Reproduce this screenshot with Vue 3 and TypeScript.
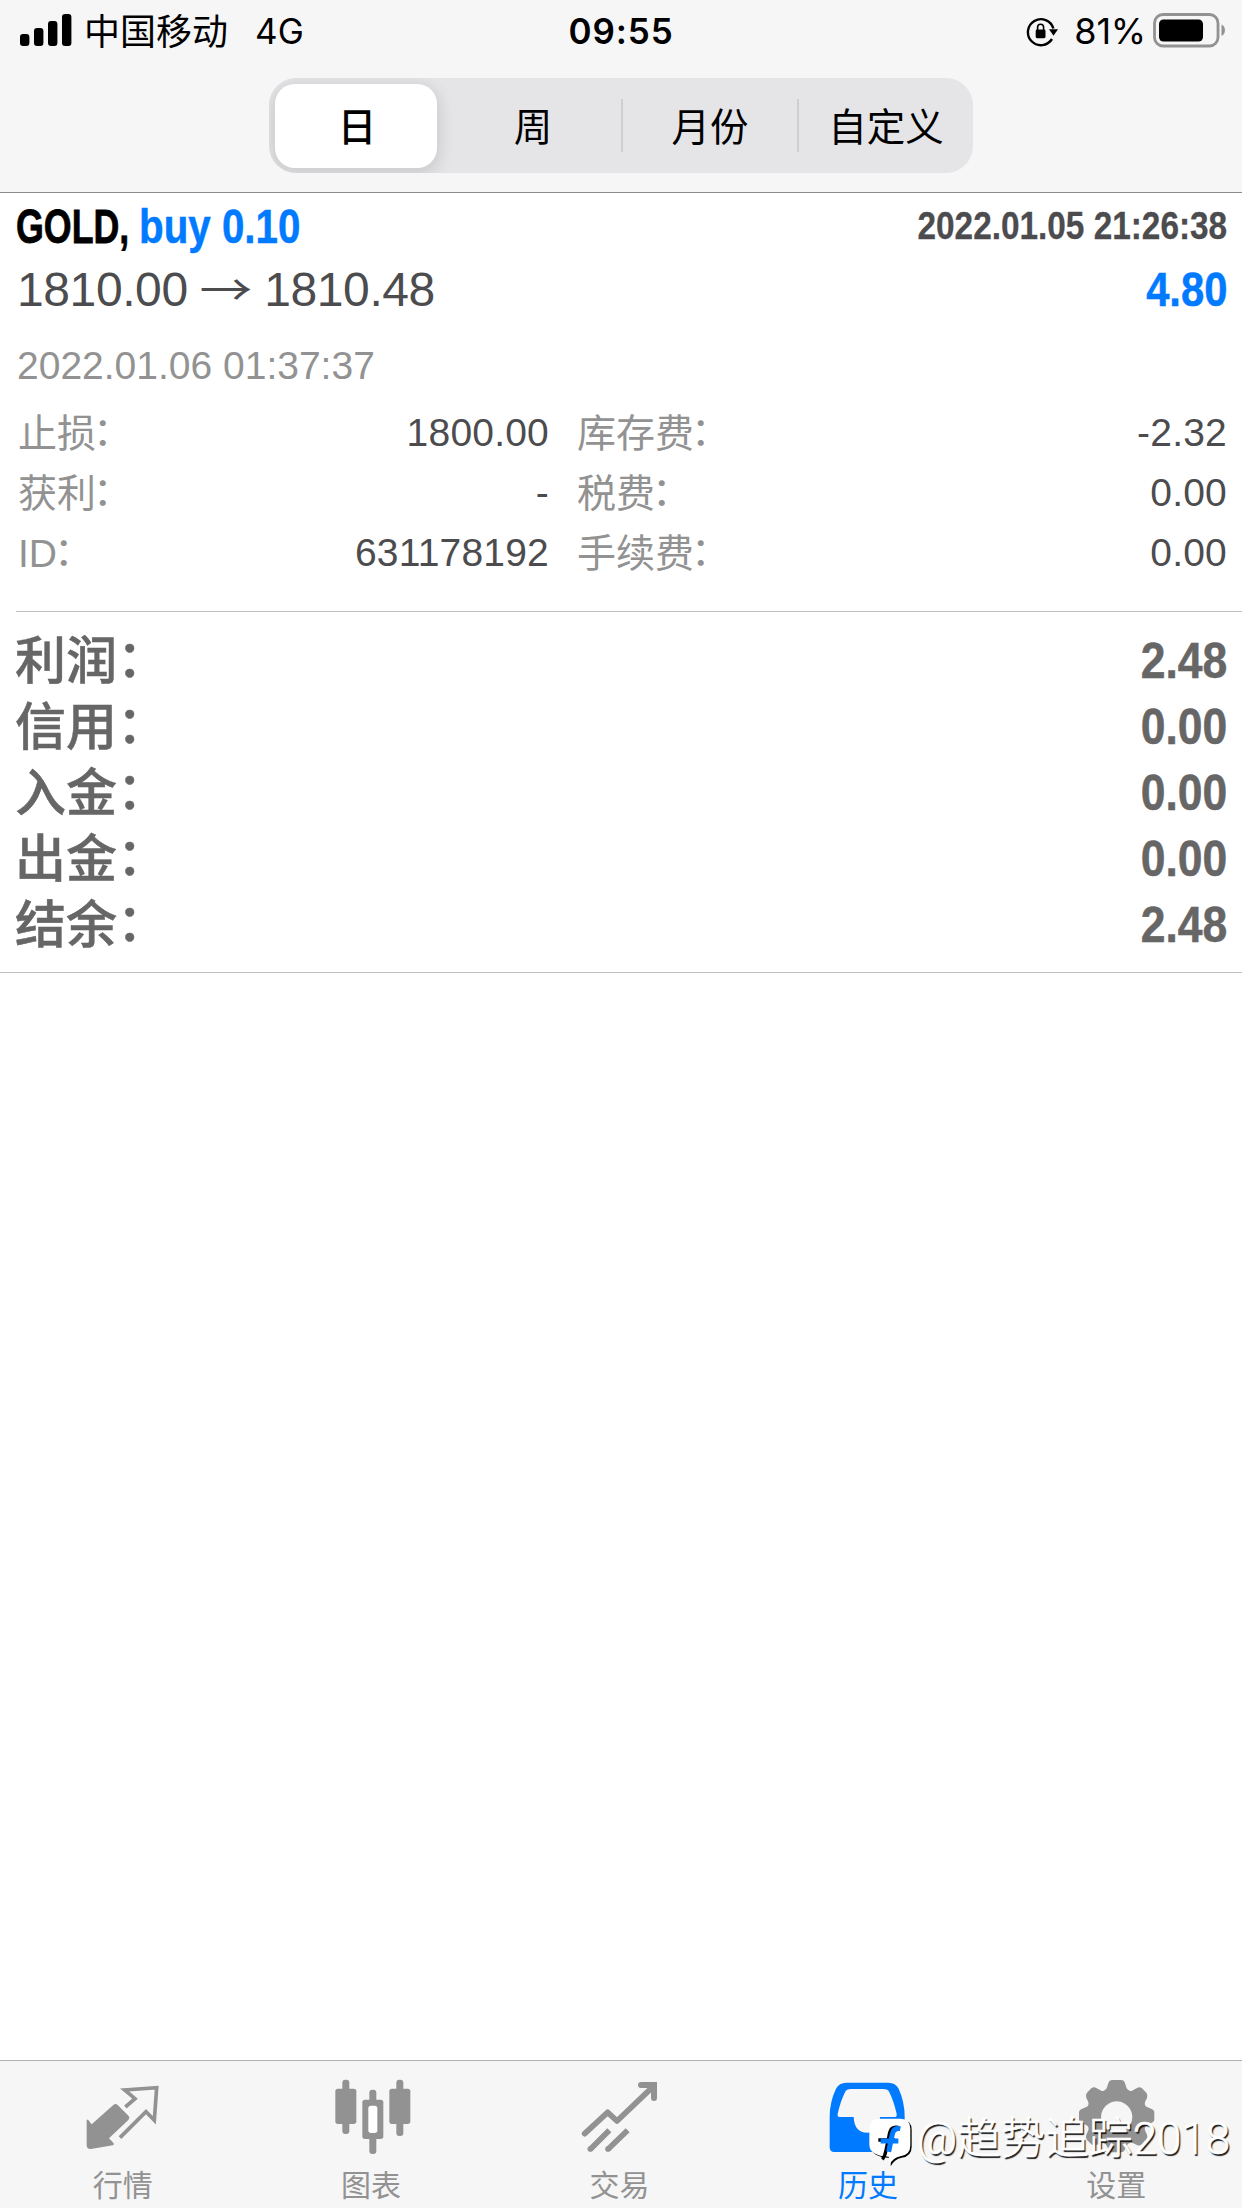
<script setup lang="ts">
interface Period { label: string; active: boolean }
interface Detail { label: string; value: string; right: string; rightValue: string }
interface Total { label: string; value: string }

const periods: Period[] = [
  { label: '日', active: true },
  { label: '周', active: false },
  { label: '月份', active: false },
  { label: '自定义', active: false },
]

const details: Detail[] = [
  { label: '止损', value: '1800.00', right: '库存费', rightValue: '-2.32' },
  { label: '获利', value: '-', right: '税费', rightValue: '0.00' },
  { label: 'ID', value: '631178192', right: '手续费', rightValue: '0.00' },
]

const totals: Total[] = [
  { label: '利润', value: '2.48' },
  { label: '信用', value: '0.00' },
  { label: '入金', value: '0.00' },
  { label: '出金', value: '0.00' },
  { label: '结余', value: '2.48' },
]
</script>

<template>
  <div class="screen">
    <header class="header">
      <div class="status">
        <div class="status-side">
          <svg class="signal" width="52" height="34" viewBox="0 0 52 34">
            <rect x="0" y="20" width="9.4" height="12" rx="3" />
            <rect x="14" y="14" width="9.4" height="18" rx="3" />
            <rect x="28" y="7" width="9.4" height="25" rx="3" />
            <rect x="42" y="0" width="9.4" height="32" rx="3" />
          </svg>
          <span class="carrier">中国移动</span>
          <span class="network">4G</span>
        </div>
        <span class="clock">09:55</span>
        <div class="status-side right">
          <svg class="lock" width="32" height="32" viewBox="0 0 32 32">
            <path d="M26 23A13 13 0 1 1 27.400 12.500" fill="none" stroke="#000" stroke-width="2.4" />
            <path d="M23 13.200h9l-4.500 6.500z" />
            <rect x="9.700" y="13.600" width="9.800" height="8.600" rx="1.4" />
            <path d="M11.600 14v-2.800a3 3 0 0 1 6 0V14" fill="none" stroke="#000" stroke-width="1.6" />
          </svg>
          <span class="percent">81%</span>
          <svg class="battery" width="74" height="36" viewBox="0 0 74 36">
            <rect x="1.5" y="1.5" width="63.5" height="31.5" rx="8.5" fill="none" stroke="#929292" stroke-width="2.8" />
            <rect x="6" y="6.500" width="44" height="22" rx="4.5" />
            <path d="M68.5 11.5c4.6 2 4.6 9.500 0 11.500z" fill="#929292" />
          </svg>
        </div>
      </div>
      <nav class="segments">
        <div v-for="p in periods" :key="p.label" class="segment" :class="{ active: p.active }">
          <span>{{ p.label }}</span>
        </div>
      </nav>
    </header>

    <main>
      <section class="deal">
        <div class="row title">
          <div class="title-left">
            <span class="symbol">GOLD,</span>
            <span class="side">buy 0.10</span>
          </div>
          <span class="open-time">2022.01.05 21:26:38</span>
        </div>
        <div class="row price">
          <span>1810.00 <span class="arrow">→</span> 1810.48</span>
          <span class="profit">4.80</span>
        </div>
        <div class="close-time">2022.01.06 01:37:37</div>
        <div class="details">
          <div v-for="d in details" :key="d.label" class="detail">
            <span class="label">{{ d.label }}<span class="colon">：</span></span>
            <span class="value mid">{{ d.value }}</span>
            <span class="label">{{ d.right }}<span class="colon">：</span></span>
            <span class="value">{{ d.rightValue }}</span>
          </div>
        </div>
      </section>
      <section class="totals">
        <div v-for="t in totals" :key="t.label" class="total">
          <span class="name">{{ t.label }}<span class="colon">：</span></span>
          <span class="sum">{{ t.value }}</span>
        </div>
      </section>
    </main>

    <footer class="tabs">
      <div class="tab">
        <svg class="icon" viewBox="253 105 240 240">
          <path d="M261 240q1-3 5 0l10 13 65-58q7-6 13 0l33 33q5 6-1 12l-58 55 14 15q3 5-3 6l-65 11q-13 1-13-12z" />
          <path d="M377 201l29-25-31-26 96-7-7 98-25-26-78 78" fill="none" stroke="#929292" stroke-width="11" />
        </svg>
        <span>行情</span>
      </div>
      <div class="tab">
        <svg class="icon" viewBox="998 105 240 240">
          <rect x="1026" y="119" width="21" height="163" rx="9" />
          <rect x="1005" y="146" width="63" height="106" rx="8" />
          <rect x="1188" y="119" width="21" height="169" rx="9" />
          <rect x="1167" y="146" width="63" height="106" rx="8" />
          <rect x="1107" y="149" width="21" height="193" rx="9" />
          <rect x="1086" y="179" width="63" height="118" rx="8" />
          <rect x="1104" y="197" width="27" height="82" rx="8" fill="#fff" />
        </svg>
        <span>图表</span>
      </div>
      <div class="tab">
        <svg class="icon" viewBox="123 105 240 240">
          <g fill="none" stroke="#929292" stroke-width="17">
            <path d="M134 281l69-64 28 26 108-103" stroke-linecap="round" stroke-linejoin="round" />
            <path d="M303 135h39v39" stroke-width="18" stroke-linecap="round" />
            <path d="M151 328l57-57M204 328l59-57" stroke-width="17" />
          </g>
          <circle cx="151" cy="327" r="8.500" />
          <circle cx="204" cy="327" r="8.500" />
        </svg>
        <span>交易</span>
      </div>
      <div class="tab active">
        <svg class="icon" viewBox="868 105 240 240">
          <path fill-rule="evenodd" d="M920 128h126q22 0 31 18 18 40 18 84v92q0 14-14 14H884q-14 0-14-14v-92q0-44 19-84 9-18 31-18zM934 147q-14 0-18 10-13 26-22 64-2 10 8 10h40q2 47 41 47 37 0 38-47h42q10 0 8-10-9-38-22-64-4-10-18-10z" />
        </svg>
        <span>历史</span>
      </div>
      <div class="tab">
        <svg class="icon" viewBox="773 105 240 240">
          <path fill-rule="evenodd" d="M876 120h26q9 0 12 10l5 15q3 5 9 7t11-2l11-6q8-5 15 1l13 13q6 8 2 16l-5 10q-3 6-1 11t8 7l12 5q9 4 8 13v18q0 8-9 11l-11 5q-6 2-8 8t1 11l5 11q4 8-2 16l-13 13q-7 6-15 2l-11-5q-5-3-11-1t-9 8l-5 11q-3 9-12 9h-26q-9 0-12-9l-5-11q-3-6-9-8t-11 1l-11 5q-8 4-15-2l-13-13q-6-8-2-16l5-11q3-5 1-11t-8-8l-11-5q-9-3-9-11v-18q-1-9 8-13l12-5q6-2 8-7t-1-11l-5-10q-4-8 2-16l13-13q7-6 15-1l11 6q5 4 11 2t9-7l5-15q3-10 12-10zM889 184a47 47 0 1 0 .1 0z" />
        </svg>
        <span>设置</span>
      </div>
      <div class="watermark">
        <svg class="mark-logo" width="48" height="52" viewBox="0 0 144 156">
          <path d="M33 8h64q30 0 30 30v50q0 29-30 33-21 3-33 26 1-16-2-25-58-3-58-36V38Q4 8 33 8z" transform="translate(4 4)" fill="#000" />
          <path d="M33 8h64q30 0 30 30v50q0 29-30 33-21 3-33 26 1-16-2-25-58-3-58-36V38Q4 8 33 8z" fill="#fff" />
          <g fill="none">
            <path d="M91 34q-22-4-26 16l-11 53q-3 18-11 27M31 72h50" stroke="#000" stroke-width="10" />
            <path d="M97 38q-20-4-24 16l-11 53M38 75h53" stroke="#007aff" stroke-width="15" />
          </g>
        </svg>
        <span class="mark-text">@趋势追踪2018</span>
      </div>
    </footer>
  </div>
</template>

<style>
body {
  margin: 0;
  background: #fff;
}
</style>

<style scoped>
.screen {
  width: 1242px;
  height: 2208px;
  display: flex;
  flex-direction: column;
  background: #fff;
  overflow: hidden;
  font-family: "Liberation Sans", "Noto Sans CJK SC", sans-serif;
  white-space: nowrap;
}
.header {
  box-sizing: border-box;
  height: 193px;
  background: #f6f6f6;
  border-bottom: 1px solid #8b8b8e;
}
.status {
  height: 60px;
  padding-top: 1px;
  box-sizing: border-box;
  display: grid;
  grid-template-columns: 1fr auto 1fr;
  font: 400 35px/60px Inter, "Noto Sans CJK SC", sans-serif;
  color: #000;
}
.status-side {
  display: flex;
}
.status-side.right {
  justify-content: flex-end;
}
.signal {
  margin: 13px 0 0 20px;
}
.carrier {
  margin: 1px 0 0 12px;
  font-size: 36px;
}
.network {
  margin-left: 27px;
}
.clock {
  font-weight: 600;
  letter-spacing: 0.9px;
}
.lock {
  margin: 15px 16px 0 0;
}
.percent {
  font-size: 36px;
  letter-spacing: -0.2px;
}
.battery {
  margin: 12px 15px 0 7px;
}
.segments {
  width: 704px;
  height: 95px;
  margin: 18px 0 0 269px;
  display: grid;
  grid-template-columns: repeat(4, 1fr);
  background: #e5e5e8;
  border-radius: 27px;
  overflow: hidden;
}
.segment {
  display: flex;
  align-items: center;
  justify-content: center;
  font-size: 38.500px;
  line-height: 54px;
  color: #000;
}
.segment + .segment + .segment {
  background: linear-gradient(#cfcfd2, #cfcfd2) 0 21px / 2px 53px no-repeat;
}
.segment:nth-child(2) span {
  margin-right: 2px;
}
.segment span {
  transform: translate(1px, 2px);
}
.segment.active {
  margin: 6px 8px 5px 6px;
  background: #fff;
  border-radius: 20px;
  font-weight: 500;
  box-shadow: 0 4px 14px 4px rgba(0, 0, 0, 0.1);
}
.deal {
  padding-top: 8px;
}
.row {
  display: flex;
  justify-content: space-between;
  padding: 0 15px 0 17px;
}
.title {
  height: 52px;
  line-height: 52px;
  font-size: 48px;
  font-weight: 700;
}
.title-left {
  display: flex;
}
.symbol {
  width: 122px;
  transform: translateX(-1px) scaleX(0.745);
  transform-origin: 0 0;
  -webkit-text-stroke: 0.8px currentColor;
}
.side {
  color: #007aff;
  transform: scaleX(0.84);
  transform-origin: 0 0;
  -webkit-text-stroke: 0.5px currentColor;
}
.open-time {
  font-size: 39px;
  color: #4c4c4f;
  transform: translateY(-1px) scaleX(0.855);
  transform-origin: 100% 0;
  -webkit-text-stroke: 0.3px currentColor;
}
.price {
  height: 60px;
  margin-top: 7px;
  line-height: 60px;
  font-size: 48px;
  color: #4c4c4f;
  letter-spacing: -0.4px;
}
.arrow {
  display: inline-block;
  margin: 0 2px 0 1px;
  font-family: "Noto Sans CJK SC", sans-serif;
  line-height: 1;
  transform: translateY(2px) scale(1.1, 0.9);
}
.profit {
  font-weight: 700;
  letter-spacing: 0;
  color: #007aff;
  transform: scaleX(0.87);
  transform-origin: 100% 0;
  -webkit-text-stroke: 0.5px currentColor;
}
.close-time {
  margin-top: 16px;
  padding-left: 17px;
  height: 60px;
  line-height: 60px;
  font-size: 39px;
  color: #929292;
}
.details {
  margin-top: 7px;
  padding: 0 15px 0 18px;
  font-size: 39px;
  color: #4c4c4f;
}
.detail {
  display: grid;
  grid-template-columns: 150px 381px 28px 1fr;
  height: 60px;
  line-height: 60px;
}
.detail > .label {
  color: #929292;
  transform: translateY(1px);
}
.label:nth-child(3) {
  margin-left: 28px;
}
.detail .colon {
  display: inline-block;
  transform: translate(-3px, -2px);
}
.value {
  text-align: right;
  letter-spacing: 0.2px;
}
.totals {
  margin: 28px 0 0;
  padding: 17px 15px 14px 15px;
  color: #666;
  font-weight: 500;
  background: linear-gradient(#c2c2c4, #c2c2c4) 16px 0 / 100% 1px no-repeat;
  border-bottom: 1px solid #c2c2c4;
}
.total {
  display: flex;
  justify-content: space-between;
  height: 66px;
  line-height: 66px;
  font-size: 51px;
}
.name {
  transform: translateY(1px);
  -webkit-text-stroke: 0.5px currentColor;
}
.total .colon {
  display: inline-block;
  transform: translateY(-2px);
}
.sum {
  font-size: 50px;
  font-weight: 700;
  transform: scaleX(0.89);
  transform-origin: 100% 0;
  -webkit-text-stroke: 0.5px currentColor;
}
.tabs {
  position: relative;
  box-sizing: border-box;
  height: 148px;
  margin-top: auto;
  border-top: 1px solid #b2b4b2;
  background: #f6f6f6;
  display: grid;
  grid-template-columns: repeat(5, 1fr);
}
.tab {
  display: flex;
  flex-direction: column;
  align-items: center;
  color: #929292;
  font-size: 30px;
  line-height: 40px;
}
.tab.active {
  color: #007aff;
}
.tab span {
  margin-top: 11px;
  margin-right: 3px;
}
.icon {
  width: 80px;
  height: 80px;
  margin-top: 14px;
  fill: currentColor;
}
.watermark {
  position: absolute;
  left: 868px;
  top: 55px;
  display: flex;
}
.mark-text {
  margin-left: 1px;
  margin-top: -5px;
  font: 300 43.900px/56px Roboto, "Noto Sans CJK SC", sans-serif;
  color: #fff;
  -webkit-text-stroke: 0.6px #fff;
  text-shadow: 1.500px 1.500px 1px rgba(0, 0, 0, 0.9);
}
</style>
